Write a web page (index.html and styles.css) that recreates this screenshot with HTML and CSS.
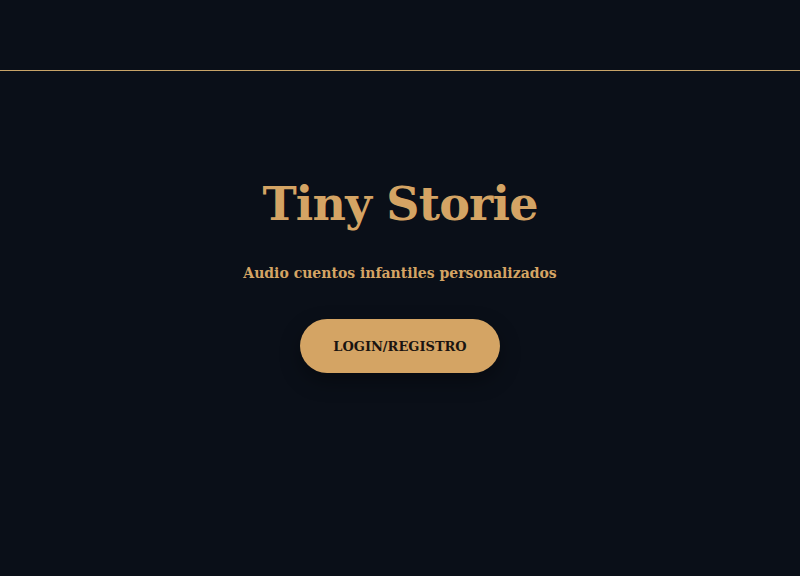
FILE: index.html
```html
<!DOCTYPE html>
<html lang="es">
<head>
<meta charset="utf-8">
<title>Tiny Storie</title>
<link rel="stylesheet" href="styles.css">
</head>
<body>
  <header class="topbar"></header>
  <main class="hero">
    <h1 class="hero-title">Tiny Storie</h1>
    <p class="hero-subtitle">Audio cuentos infantiles personalizados</p>
    <a class="hero-button" href="#">LOGIN/REGISTRO</a>
  </main>
</body>
</html>
```

FILE: styles.css
```css
html, body {
  margin: 0;
  padding: 0;
  height: 100%;
}

body {
  background: #0a0f18;
  font-family: "DejaVu Serif", serif;
  color: #d4a464;
}

.topbar {
  height: 71px;
  border-bottom: 1px solid #c8a468;
  box-sizing: border-box;
}

.hero {
  display: flex;
  flex-direction: column;
  align-items: center;
  padding-top: 103px;
}

.hero-title {
  margin: 0;
  font-size: 46px;
  font-weight: bold;
  line-height: 60px;
  letter-spacing: -0.8px;
  color: #d4a464;
}

.hero-subtitle {
  margin: 29px 0 0;
  font-size: 14px;
  font-weight: bold;
  line-height: 20px;
  color: #d4a464;
}

.hero-button {
  margin-top: 36px;
  display: flex;
  align-items: center;
  justify-content: center;
  width: 200px;
  height: 54px;
  border-radius: 27px;
  background: #d4a464;
  color: #1a1410;
  font-size: 13px;
  font-weight: bold;
  text-decoration: none;
  box-shadow: 0 8px 20px rgba(0, 0, 0, 0.35);
}
```
